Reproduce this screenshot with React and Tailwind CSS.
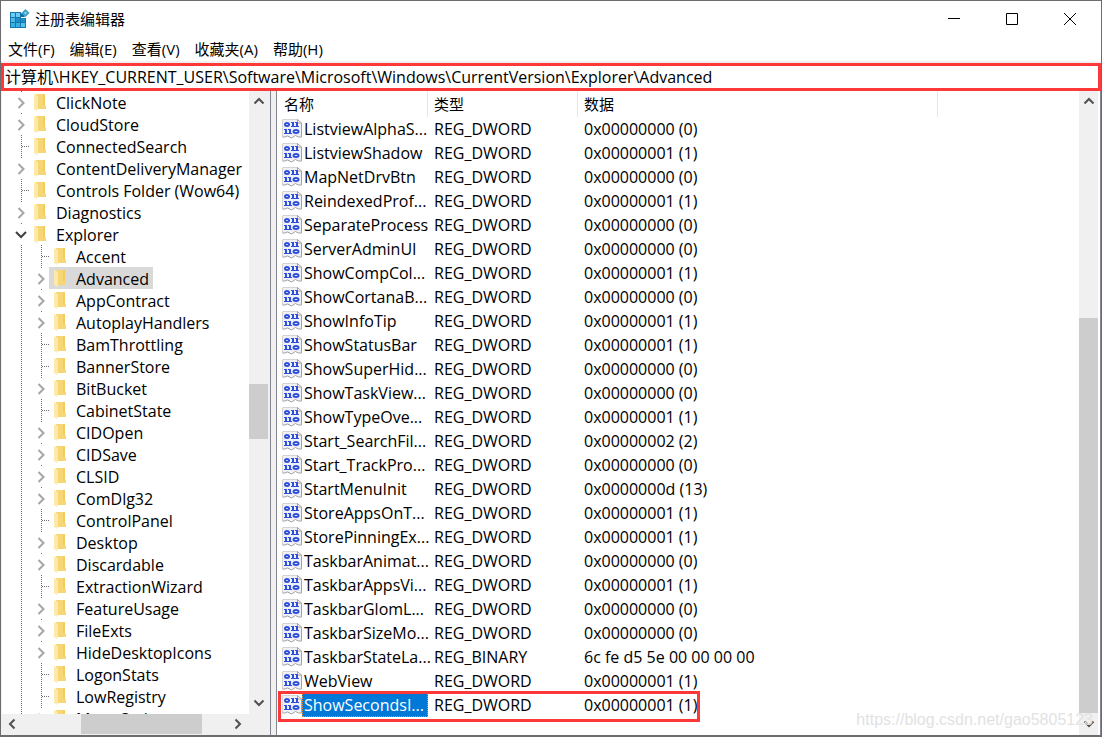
import { useState } from 'react';

const tree = [
  { name: 'ClickNote', level: 1, children: true },
  { name: 'CloudStore', level: 1, children: true },
  { name: 'ConnectedSearch', level: 1 },
  { name: 'ContentDeliveryManager', level: 1, children: true },
  { name: 'Controls Folder (Wow64)', level: 1 },
  { name: 'Diagnostics', level: 1, children: true },
  { name: 'Explorer', level: 1, children: true, open: true },
  { name: 'Accent', level: 2 },
  { name: 'Advanced', level: 2, children: true },
  { name: 'AppContract', level: 2, children: true },
  { name: 'AutoplayHandlers', level: 2, children: true },
  { name: 'BamThrottling', level: 2 },
  { name: 'BannerStore', level: 2 },
  { name: 'BitBucket', level: 2, children: true },
  { name: 'CabinetState', level: 2 },
  { name: 'CIDOpen', level: 2, children: true },
  { name: 'CIDSave', level: 2, children: true },
  { name: 'CLSID', level: 2, children: true },
  { name: 'ComDlg32', level: 2, children: true },
  { name: 'ControlPanel', level: 2 },
  { name: 'Desktop', level: 2, children: true },
  { name: 'Discardable', level: 2, children: true },
  { name: 'ExtractionWizard', level: 2 },
  { name: 'FeatureUsage', level: 2, children: true },
  { name: 'FileExts', level: 2, children: true },
  { name: 'HideDesktopIcons', level: 2, children: true },
  { name: 'LogonStats', level: 2 },
  { name: 'LowRegistry', level: 2 },
  { name: 'MenuOrder', level: 2, children: true },
];

const values = [
  ['ListviewAlphaS...', 'REG_DWORD', '0x00000000 (0)'],
  ['ListviewShadow', 'REG_DWORD', '0x00000001 (1)'],
  ['MapNetDrvBtn', 'REG_DWORD', '0x00000000 (0)'],
  ['ReindexedProf...', 'REG_DWORD', '0x00000001 (1)'],
  ['SeparateProcess', 'REG_DWORD', '0x00000000 (0)'],
  ['ServerAdminUI', 'REG_DWORD', '0x00000000 (0)'],
  ['ShowCompCol...', 'REG_DWORD', '0x00000001 (1)'],
  ['ShowCortanaB...', 'REG_DWORD', '0x00000000 (0)'],
  ['ShowInfoTip', 'REG_DWORD', '0x00000001 (1)'],
  ['ShowStatusBar', 'REG_DWORD', '0x00000001 (1)'],
  ['ShowSuperHid...', 'REG_DWORD', '0x00000000 (0)'],
  ['ShowTaskView...', 'REG_DWORD', '0x00000000 (0)'],
  ['ShowTypeOve...', 'REG_DWORD', '0x00000001 (1)'],
  ['Start_SearchFil...', 'REG_DWORD', '0x00000002 (2)'],
  ['Start_TrackPro...', 'REG_DWORD', '0x00000000 (0)'],
  ['StartMenuInit', 'REG_DWORD', '0x0000000d (13)'],
  ['StoreAppsOnT...', 'REG_DWORD', '0x00000001 (1)'],
  ['StorePinningEx...', 'REG_DWORD', '0x00000001 (1)'],
  ['TaskbarAnimat...', 'REG_DWORD', '0x00000000 (0)'],
  ['TaskbarAppsVi...', 'REG_DWORD', '0x00000001 (1)'],
  ['TaskbarGlomL...', 'REG_DWORD', '0x00000000 (0)'],
  ['TaskbarSizeMo...', 'REG_DWORD', '0x00000000 (0)'],
  ['TaskbarStateLa...', 'REG_BINARY', '6c fe d5 5e 00 00 00 00'],
  ['WebView', 'REG_DWORD', '0x00000001 (1)'],
  ['ShowSecondsI...', 'REG_DWORD', '0x00000001 (1)'],
];

const menus = ['文件(F)', '编辑(E)', '查看(V)', '收藏夹(A)', '帮助(H)'];

function AppIcon() {
  return (
    <svg width="20" height="20" viewBox="0 0 20 20" aria-hidden="true">
      <path d="M0 3h11v6h5v10H0z" fill="#1478ae" />
      <path d="M1 4h4v4H1zM6 4h4v4H6z" fill="#6ccdf2" />
      <path d="M1 9h4v4H1z" fill="#4dbbe8" />
      <path d="M6 9h4v4H6zM11 9h4v4h-4z" fill="#1c8fcb" />
      <path d="M1 14h4v4H1zM6 14h4v4H6z" fill="#35b0e2" />
      <path d="M11 14h4v4h-4z" fill="#53c4ee" />
      <path d="M11 4v4h4l-2-3z" fill="#0d6fa6" />
      <path d="M15.500 0l4 4-4 4-4-4z" fill="#3c9cc8" />
      <path d="M15.500 2.500L17 4l-1.500 1.500L14 4z" fill="#8bdcf5" />
    </svg>
  );
}

function FolderIcon() {
  return (
    <svg className="shrink-0" width="12" height="18" viewBox="0 0 12 18" aria-hidden="true">
      <path d="M2 1h9v11l1 1v3H2z" fill="#f7d675" />
      <path d="M9 1h2v11H9z" fill="#f3cb5f" />
      <path d="M0 1l4 2v12l-1 3-3-2z" fill="#fde9a9" />
    </svg>
  );
}

function ValueIcon() {
  return (
    <svg className="shrink-0" width="20" height="20" viewBox="0 0 20 20" aria-hidden="true">
      <path d="M.5.5h15l4 3.500v14h-3l-3-1.500-4 2.500-4-2-2.500 1H.5z" fill="#f0f1f4" />
      <path d="M.5 18V.5H16" fill="none" stroke="#d4d4d4" />
      <path d="M19.500 4v14h-3l-3-1.500-4 2.500-4-2-2.500 1H.5" fill="none" stroke="#a3a3a3" />
      <path d="M15.500.5V4h4z" fill="#fff" stroke="#a3a3a3" />
      <g fill="none" stroke="#3050dc" strokeWidth="2">
        <ellipse cx="5" cy="5.500" rx="2" ry="1.500" />
        <path d="M11 3v5M15 3v5M4 10v5M8 10v5" />
        <ellipse cx="14" cy="12.500" rx="2.500" ry="1.500" />
      </g>
      <path d="M9 3.500h2M13 3.500h2M9 7.500h4M13 7.500h4M2 10.500h2M6 10.500h2M2 14.500h4M6 14.500h4" stroke="#3050dc" />
    </svg>
  );
}

function Arrow({ d, color = '#505050' }) {
  return (
    <svg width="12" height="12" viewBox="0 0 12 12" fill="none" stroke={color} strokeWidth="2" aria-hidden="true">
      <path d={d} />
    </svg>
  );
}

const UP = 'M1.500 8.500L6 4l4.500 4.500';
const DOWN = 'M1.500 3.500L6 8l4.500-4.500';
const LEFT = 'M8.500 1.500L4 6l4.500 4.500';
const RIGHT = 'M3.500 1.500L8 6l-4.500 4.500';

// dotted line that joins a key to its siblings, with the expander over it
function Guide({ item }) {
  return (
    <svg className="h-[22px] w-[18px] shrink-0" viewBox="0 0 18 22" fill="none" aria-hidden="true">
      <path
        d={item.children ? 'M10.500 0v1' : 'M10.500 0v22M11 11.500h8'}
        stroke="#707070"
        strokeDasharray="1 1"
      />
      {item.children && !item.open && <path d="M7.500 7L12.500 12l-5 5" stroke="#a6a6a6" strokeWidth="2" />}
      {item.open && <path d="M5 9l5 5 5-5" stroke="#404040" strokeWidth="2" />}
    </svg>
  );
}

function TreeRow({ item, selected, onSelect }) {
  return (
    <li role="treeitem" aria-selected={selected} className="flex h-[22px] shrink-0">
      {item.level === 2 && (
        <svg className="h-[22px] w-5 shrink-0" viewBox="0 0 20 22" aria-hidden="true">
          <path d="M10.500 0v22" stroke="#707070" strokeDasharray="1 1" />
        </svg>
      )}
      <Guide item={item} />
      <button
        onClick={onSelect}
        className={`flex items-center gap-[10px] pl-[5px] pr-1 whitespace-nowrap ${selected ? 'bg-[#d9d9d9]' : ''}`}
      >
        <FolderIcon />
        <span className="pt-0.5">{item.name}</span>
      </button>
    </li>
  );
}

function WindowButton({ label, children }) {
  return (
    <button aria-label={label} className="flex w-[58px] items-center justify-center">
      <svg width="14" height="14" viewBox="0 0 14 14" fill="none" stroke="#000" aria-hidden="true">
        {children}
      </svg>
    </button>
  );
}

function VerticalScroll({ className, before, size, after }) {
  return (
    <div className={`flex w-[19px] shrink-0 flex-col bg-[#f0f0f0] ${className}`}>
      <button aria-label="向上" className="flex h-[22px] justify-center pt-1"><Arrow d={UP} /></button>
      <div className={before} />
      <div className={`bg-[#cdcdcd] ${size}`} />
      <div className={after} />
      <button aria-label="向下" className="flex h-[22px] items-center justify-center"><Arrow d={DOWN} /></button>
    </div>
  );
}

export default function App() {
  const [key, setKey] = useState('Advanced');
  const [value, setValue] = useState('ShowSecondsI...');
  const [path, setPath] = useState(
    '计算机\\HKEY_CURRENT_USER\\Software\\Microsoft\\Windows\\CurrentVersion\\Explorer\\Advanced'
  );

  return (
    <div className="relative flex h-screen flex-col overflow-hidden border border-b-2 border-[#6b6b70] bg-white font-['Open_Sans','Noto_Sans_CJK_SC',sans-serif] text-[16px] leading-[22px] text-black">
      <header className="flex h-9 shrink-0 pr-0.5 pl-[9px] text-[15px]">
        <div className="flex flex-1 items-center gap-[5px]">
          <AppIcon />
          <h1>注册表编辑器</h1>
        </div>
        <WindowButton label="最小化"><path d="M1 6.500h12" /></WindowButton>
        <WindowButton label="最大化"><path d="M1.500 1.500h11v11h-11z" /></WindowButton>
        <WindowButton label="关闭"><path d="M1 1l12 12M13 1L1 13" /></WindowButton>
      </header>

      <nav className="flex h-[26px] shrink-0 items-center gap-[15px] border-b-2 border-[#f0f0f0] pl-[7px] text-[15px]">
        {menus.map((m) => (
          <button key={m}>{m}</button>
        ))}
      </nav>

      <input
        aria-label="地址"
        value={path}
        onChange={(e) => setPath(e.target.value)}
        className="h-7 shrink-0 border-3 border-[#fc3838] px-px pb-0.5 outline-none"
      />

      <main className="flex min-h-0 flex-1 bg-[#f0f0f0]">
        <section className="flex w-[270px] shrink-0 flex-col border-r border-[#828790] pl-px pr-px">
          <div className="flex min-h-0 flex-1">
            <ul role="tree" className="flex flex-1 flex-col overflow-hidden bg-white pl-[9px]">
              {tree.map((item) => (
                <TreeRow
                  key={item.name}
                  item={item}
                  selected={item.name === key}
                  onSelect={() => setKey(item.name)}
                />
              ))}
            </ul>
            <VerticalScroll className="mr-px" before="grow-[271]" size="grow-[55]" after="grow-[253]" />
          </div>
          <div className="flex h-[21px] shrink-0 items-center pb-px">
            <button aria-label="向左" className="flex w-5 justify-center"><Arrow d={LEFT} /></button>
            <div className="w-[59px]" />
            <div className="h-full w-[121px] bg-[#cdcdcd]" />
            <div className="w-[26px]" />
            <button aria-label="向右" className="flex w-5 justify-center"><Arrow d={RIGHT} /></button>
          </div>
        </section>

        <section className="ml-[5px] flex min-w-0 flex-1 border-x border-[#828790] bg-white">
          <div className="min-w-0 flex-1 overflow-hidden">
            <table className="w-[661px] table-fixed border-separate border-spacing-0 text-left">
              <thead>
                <tr className="h-[26px] text-[15px]">
                  <th className="w-[151px] border-r border-[#e5e5e5] p-0 pl-[7px] font-normal">名称</th>
                  <th className="w-[150px] border-r border-[#e5e5e5] p-0 pl-1.5 font-normal">类型</th>
                  <th className="w-[360px] border-r border-[#e5e5e5] p-0 pl-1.5 font-normal">数据</th>
                </tr>
              </thead>
              <tbody>
                {values.map(([name, type, data]) => {
                  const active = name === value;
                  return (
                    <tr key={name} onClick={() => setValue(name)} className="relative h-6">
                      <td className="p-0 pl-[5px]">
                        <div className="flex h-6 items-center">
                          <ValueIcon />
                          <span
                            className={`border border-dotted pl-px whitespace-nowrap ${
                              active ? 'flex-1 border-[#ff8728] bg-[#0078d7] text-white' : 'border-transparent'
                            }`}
                          >
                            {name}
                          </span>
                        </div>
                        {active && (
                          <div className="pointer-events-none absolute -top-0.5 left-px h-[31px] w-[422px] border-3 border-[#fc3838]" />
                        )}
                      </td>
                      <td className="p-0 pl-1.5">{type}</td>
                      <td className="p-0 pl-1.5">{data}</td>
                    </tr>
                  );
                })}
              </tbody>
            </table>
          </div>
          <VerticalScroll className="mr-0.5" before="grow-[205]" size="grow-[395]" after="grow-0" />
        </section>
      </main>

      <p className="pointer-events-none absolute right-2 bottom-1 font-['Liberation_Sans',sans-serif] text-[16px] text-[#e2e2e2]">
        https://blog.csdn.net/gao5805123
      </p>
    </div>
  );
}
